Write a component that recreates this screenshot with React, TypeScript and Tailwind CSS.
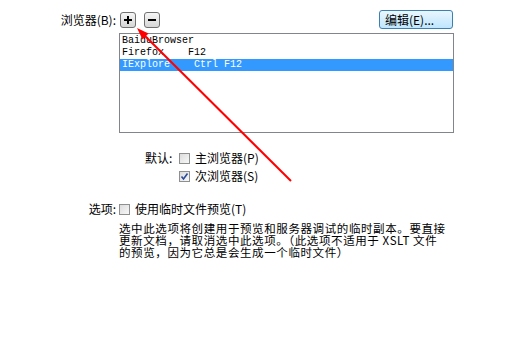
import React from "react";

const cjk = { fontFamily: '"Noto Sans CJK SC", "Noto Sans", sans-serif' };

function Checkbox({ checked }: { checked?: boolean }) {
  return (
    <div className="w-[11px] h-[11px] border border-[#8e8f8f] bg-gradient-to-br from-[#dcdcdc] to-[#f8f8f8] flex items-center justify-center shrink-0">
      {checked && (
        <svg width="9" height="9" viewBox="0 0 9 9">
          <path d="M1.5 4.5 L3.5 7 L7.5 1.5" stroke="#2b4b9c" strokeWidth="1.6" fill="none" />
        </svg>
      )}
    </div>
  );
}

function SmallBtn({ minus }: { minus?: boolean }) {
  return (
    <div className="w-[16px] h-[16px] rounded-[3px] border border-[#707070] bg-gradient-to-b from-[#f6f6f6] to-[#d6d6d6] flex items-center justify-center">
      <svg width="10" height="10" viewBox="0 0 10 10">
        <rect x="1" y="4" width="8" height="2" fill="#000" />
        {!minus && <rect x="4" y="1" width="2" height="8" fill="#000" />}
      </svg>
    </div>
  );
}

export default function App() {
  return (
    <div className="relative w-[531px] h-[364px] bg-white text-black overflow-hidden" style={cjk}>
      <div className="flex flex-col text-[12px] leading-[12px]">
        {/* Row 1 */}
        <div className="flex items-center mt-[10px] h-[19px]">
          <div className="w-[116px] flex justify-end whitespace-nowrap">浏览器(B):</div>
          <div className="ml-[3px] w-[335px] flex items-center">
            <div className="ml-[1px]">
              <SmallBtn />
            </div>
            <div className="ml-[8px]">
              <SmallBtn minus />
            </div>
            <div className="ml-auto mr-[1px] w-[74px] h-[19px] rounded-[3px] border border-[#3c7fb1] bg-gradient-to-b from-[#eaf6fd] to-[#bee6fd] flex items-center pl-[5px] whitespace-nowrap">
              编辑(E)...
            </div>
          </div>
        </div>

        {/* List box */}
        <div
          className="ml-[119px] mt-[4px] w-[335px] h-[100px] border border-[#82858c] pt-[1px] text-[10px] leading-[12px]"
          style={{ fontFamily: '"Liberation Mono", monospace' }}
        >
          <div className="h-[12px] pl-[2px] whitespace-pre">BaiduBrowser</div>
          <div className="h-[12px] pl-[2px] whitespace-pre">{"Firefox    F12"}</div>
          <div className="h-[12px] pl-[2px] whitespace-pre bg-[#3399ff] text-white">{"IExplore    Ctrl F12"}</div>
        </div>

        {/* 默认 */}
        <div className="flex items-center ml-[145px] mt-[19px] h-[12px]">
          <div className="w-[34px] whitespace-nowrap">默认:</div>
          <Checkbox />
          <div className="ml-[5px] whitespace-nowrap">主浏览器(P)</div>
        </div>
        <div className="flex items-center ml-[179px] mt-[6px] h-[12px]">
          <Checkbox checked />
          <div className="ml-[5px] whitespace-nowrap">次浏览器(S)</div>
        </div>

        {/* 选项 */}
        <div className="flex items-center mt-[21px] h-[12px]">
          <div className="w-[116px] flex justify-end whitespace-nowrap">选项:</div>
          <div className="ml-[3px]">
            <Checkbox />
          </div>
          <div className="ml-[5px] whitespace-nowrap">使用临时文件预览(T)</div>
        </div>
        <div className="ml-[119px] mt-[7px] flex flex-col whitespace-nowrap text-[11.5px] leading-[12px] tracking-[0.6px]">
          <div>选中此选项将创建用于预览和服务器调试的临时副本。要直接</div>
          <div>更新文档，请取消选中此选项。（此选项不适用于 XSLT 文件</div>
          <div>的预览，因为它总是会生成一个临时文件）</div>
        </div>
      </div>

      {/* Red arrow annotation */}
      <svg className="absolute inset-0 pointer-events-none" width="531" height="364" viewBox="0 0 531 364">
        <line x1="291" y1="181" x2="142" y2="33" stroke="#ff0000" strokeWidth="2" />
        <polygon points="137,28 148.5,33.5 142.5,39.5" fill="#ff0000" />
      </svg>
    </div>
  );
}
